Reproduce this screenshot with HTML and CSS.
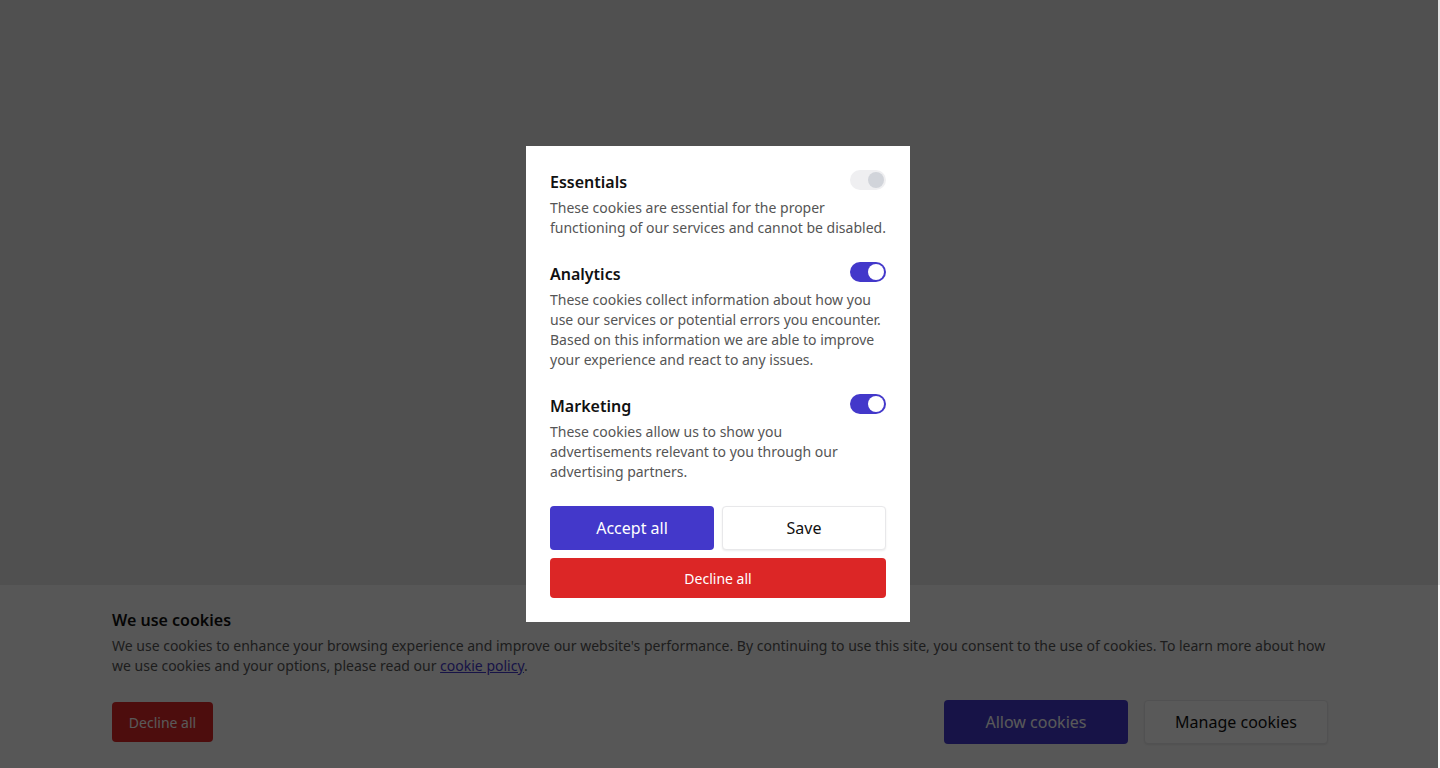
FILE: index.html
```html
<!DOCTYPE html>
<html lang="en">
<head>
<meta charset="utf-8">
<title>Cookie preferences</title>
<link rel="stylesheet" href="styles.css">
</head>
<body>
<div class="page">
  <div class="page-main"></div>
  <section class="banner">
    <div class="banner-inner">
      <h2 class="banner-title">We use cookies</h2>
      <p class="banner-text">We use cookies to enhance your browsing experience and improve our website's performance. By continuing to use this site, you consent to the use of cookies. To learn more about how we use cookies and your options, please read our <a href="#" class="link">cookie policy</a>.</p>
      <div class="banner-actions">
        <button class="btn btn-red btn-sm">Decline all</button>
        <div class="banner-right">
          <button class="btn btn-indigo btn-wide">Allow cookies</button>
          <button class="btn btn-white btn-wide">Manage cookies</button>
        </div>
      </div>
    </div>
  </section>
</div>

<div class="overlay">
  <div class="modal">
    <div class="option">
      <div class="option-head">
        <h3 class="option-title">Essentials</h3>
        <span class="toggle toggle-disabled"><span class="knob"></span></span>
      </div>
      <p class="option-text">These cookies are essential for the proper functioning of our services and cannot be disabled.</p>
    </div>
    <div class="option">
      <div class="option-head">
        <h3 class="option-title">Analytics</h3>
        <span class="toggle toggle-on"><span class="knob"></span></span>
      </div>
      <p class="option-text">These cookies collect information about how you use our services or potential errors you encounter. Based on this information we are able to improve your experience and react to any issues.</p>
    </div>
    <div class="option">
      <div class="option-head">
        <h3 class="option-title">Marketing</h3>
        <span class="toggle toggle-on"><span class="knob"></span></span>
      </div>
      <p class="option-text">These cookies allow us to show you advertisements relevant to you through our advertising partners.</p>
    </div>
    <div class="modal-actions">
      <div class="modal-row">
        <button class="btn btn-indigo">Accept all</button>
        <button class="btn btn-white">Save</button>
      </div>
      <button class="btn btn-red btn-full">Decline all</button>
    </div>
  </div>
</div>
</body>
</html>
```
FILE: styles.css
```css
* { box-sizing: border-box; }
html, body { margin: 0; padding: 0; }
body {
  font-family: "Noto Sans", "Open Sans", sans-serif;
  background: #e4e4e4;
  height: 768px;
  overflow: hidden;
}
.page {
  height: 100vh;
  display: flex;
  flex-direction: column;
}
.page-main { flex: 1; }
.banner {
  background: #f9f9f9;
  padding: 23px 0 24px;
}
.banner-inner {
  width: 1216px;
  margin: 0 auto;
}
.banner-title {
  margin: 0;
  font-size: 16px;
  line-height: 24px;
  font-weight: 600;
  color: #111;
}
.banner-text {
  margin: 4px 0 0;
  font-size: 14px;
  line-height: 20px;
  color: #555;
}
.link { color: #4338ca; text-decoration: underline; }
.banner-actions {
  margin-top: 24px;
  display: flex;
  justify-content: space-between;
  align-items: center;
}
.banner-right { display: flex; gap: 16px; }
.btn {
  font-family: inherit;
  border: none;
  border-radius: 4px;
  height: 44px;
  font-size: 16px;
  cursor: pointer;
  padding: 0 16px;
}
.btn-sm { height: 40px; font-size: 14px; min-width: 101px; }
.btn-wide { width: 184px; }
.btn-red { background: #dc2626; color: #fff; }
.btn-indigo { background: #4338ca; color: #fff; }
.btn-white {
  background: #fff;
  color: #111;
  border: 1px solid #e8e8ea;
  box-shadow: 0 1px 2px rgba(0,0,0,0.08);
}
.overlay {
  position: fixed;
  top: 0; left: 0;
  width: 1438px;
  height: 100vh;
  background: rgba(0,0,0,0.65);
  display: flex;
  align-items: center;
  justify-content: center;
  padding-right: 2px;
}
.modal {
  width: 384px;
  background: #fff;
  padding: 24px;
  display: flex;
  flex-direction: column;
  gap: 24px;
}
.option-head {
  display: flex;
  justify-content: space-between;
  align-items: flex-start;
}
.option-title {
  margin: 0;
  font-size: 16px;
  line-height: 24px;
  font-weight: 600;
  color: #111;
}
.option-text {
  margin: 4px 0 0;
  font-size: 14px;
  line-height: 20px;
  color: #555;
}
.toggle {
  width: 36px;
  height: 20px;
  border-radius: 10px;
  display: flex;
  align-items: center;
  justify-content: flex-end;
  padding: 0 2px;
}
.knob {
  width: 16px;
  height: 16px;
  border-radius: 50%;
  background: #fff;
}
.toggle-on { background: #4338ca; }
.toggle-disabled { background: #efeff1; }
.toggle-disabled .knob { background: #d1d4da; }
.modal-actions { display: flex; flex-direction: column; gap: 8px; }
.modal-row { display: grid; grid-template-columns: 1fr 1fr; gap: 8px; }
.btn-full { width: 100%; height: 40px; font-size: 14px; }
```
